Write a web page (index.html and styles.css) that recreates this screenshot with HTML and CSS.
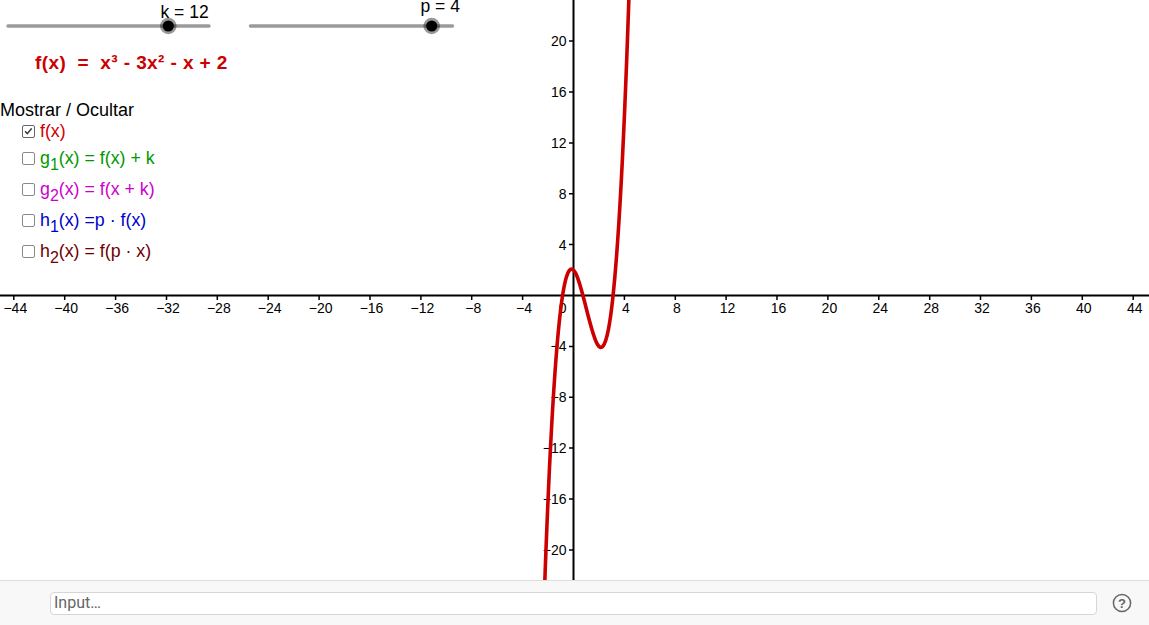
FILE: index.html
```html
<!DOCTYPE html>
<html lang="es">
<head>
<meta charset="utf-8">
<title>Transformaciones de funciones</title>
<link rel="stylesheet" href="styles.css">
</head>
<body>
<div class="app">
  <div class="canvas">
    <svg class="graph" width="1149" height="580" viewBox="0 0 1149 580">
      <line class="axis" x1="0" y1="295.5" x2="1149" y2="295.5"/>
      <line class="axis" x1="573.5" y1="0" x2="573.5" y2="580"/>
      <path class="ticks" d="M13.8 296v4M64.7 296v4M115.6 296v4M166.5 296v4M217.3 296v4M268.2 296v4M319.1 296v4M370 296v4M420.9 296v4M471.7 296v4M522.6 296v4M624.4 296v4M675.3 296v4M726.1 296v4M777 296v4M827.9 296v4M878.8 296v4M929.7 296v4M980.5 296v4M1031.4 296v4M1082.3 296v4M1133.2 296v4M569 41.1h4M569 92h4M569 142.9h4M569 193.7h4M569 244.6h4M569 346.4h4M569 397.3h4M569 448.1h4M569 499h4M569 549.9h4"/>
      <g class="ax ax-x">
        <text x="15.3" y="313">−44</text>
        <text x="66.2" y="313">−40</text>
        <text x="117.1" y="313">−36</text>
        <text x="168" y="313">−32</text>
        <text x="218.8" y="313">−28</text>
        <text x="269.7" y="313">−24</text>
        <text x="320.6" y="313">−20</text>
        <text x="371.5" y="313">−16</text>
        <text x="422.4" y="313">−12</text>
        <text x="473.2" y="313">−8</text>
        <text x="524.1" y="313">−4</text>
        <text x="625.9" y="313">4</text>
        <text x="676.8" y="313">8</text>
        <text x="727.6" y="313">12</text>
        <text x="778.5" y="313">16</text>
        <text x="829.4" y="313">20</text>
        <text x="880.3" y="313">24</text>
        <text x="931.2" y="313">28</text>
        <text x="982" y="313">32</text>
        <text x="1032.9" y="313">36</text>
        <text x="1083.8" y="313">40</text>
        <text x="1134.7" y="313">44</text>
      </g>
      <g class="ax ax-y">
        <text x="566.5" y="313">0</text>
        <text x="566.5" y="46.1">20</text>
        <text x="566.5" y="97">16</text>
        <text x="566.5" y="147.9">12</text>
        <text x="566.5" y="198.7">8</text>
        <text x="566.5" y="249.6">4</text>
        <text x="566.5" y="351.4">−4</text>
        <text x="566.5" y="402.3">−8</text>
        <text x="566.5" y="453.1">−12</text>
        <text x="566.5" y="504">−16</text>
        <text x="566.5" y="554.9">−20</text>
      </g>
      <path class="curve" d="M544.24 597.43C573.08 -229.17 601.91 885.17 630.74 -59.07"/>

      <line class="track" x1="8" y1="26" x2="209" y2="26"/>
      <circle class="halo" cx="168.3" cy="26" r="8.3"/>
      <circle class="knob" cx="168.3" cy="26" r="5.6"/>
      <text class="slider-label" x="160.5" y="17.5">k = 12</text>

      <line class="track" x1="250.5" y1="26" x2="452.5" y2="26"/>
      <circle class="halo" cx="431.7" cy="26" r="8.3"/>
      <circle class="knob" cx="431.7" cy="26" r="5.6"/>
      <text class="slider-label" x="420.5" y="12">p = 4</text>

      <text class="formula" x="35" y="68.5" xml:space="preserve">f(x)  =  x³ - 3x² - x + 2</text>
    </svg>

    <div class="caption">Mostrar / Ocultar</div>
    <ul class="toggles">
      <li class="toggle c-f">
        <span class="box checked"><svg viewBox="0 0 13 13" width="11" height="11"><path d="M2.5 6.3l2.6 2.8 5.2-6.3" /></svg></span>
        <span>f(x)</span>
      </li>
      <li class="toggle c-g1">
        <span class="box"></span>
        <span>g<sub>1</sub>(x) = f(x) + k</span>
      </li>
      <li class="toggle c-g2">
        <span class="box"></span>
        <span>g<sub>2</sub>(x) = f(x + k)</span>
      </li>
      <li class="toggle c-h1">
        <span class="box"></span>
        <span>h<sub>1</sub>(x) =p · f(x)</span>
      </li>
      <li class="toggle c-h2">
        <span class="box"></span>
        <span>h<sub>2</sub>(x) = f(p · x)</span>
      </li>
    </ul>
  </div>

  <div class="inputbar">
    <div class="input">Input…</div>
    <svg class="help" viewBox="0 0 20 20" width="20" height="20">
      <circle cx="10" cy="10" r="8.6"/>
      <text x="10" y="14.6">?</text>
    </svg>
  </div>
</div>
</body>
</html>
```

FILE: styles.css
```css
html, body {
  margin: 0;
  padding: 0;
  background: #ffffff;
}

body {
  font-family: "Liberation Sans", Arial, sans-serif;
  color: #000;
}

.app {
  width: 1149px;
  height: 625px;
  display: flex;
  flex-direction: column;
  overflow: hidden;
}

.canvas {
  position: relative;
  flex: none;
  height: 580px;
  overflow: hidden;
}

.graph {
  display: block;
}

.axis {
  stroke: #000;
  stroke-width: 2;
}

.ticks {
  stroke: #000;
  stroke-width: 1.5;
  fill: none;
}

.ax {
  font-family: "Liberation Sans", Arial, sans-serif;
  font-size: 14px;
  fill: #000;
}

.ax-x {
  text-anchor: middle;
}

.ax-y {
  text-anchor: end;
}

.curve {
  fill: none;
  stroke: #cc0000;
  stroke-width: 3.6;
  stroke-linecap: round;
}

.track {
  stroke: #9a9a9a;
  stroke-width: 3.4;
  stroke-linecap: round;
}

.halo {
  fill: #000;
  fill-opacity: 0.4;
}

.knob {
  fill: #000;
}

.slider-label {
  font-family: "Liberation Sans", Arial, sans-serif;
  font-size: 17.5px;
  fill: #000;
}

.formula {
  font-family: "Liberation Sans", Arial, sans-serif;
  font-size: 19px;
  font-weight: bold;
  letter-spacing: 0.4px;
  fill: #cc0000;
  white-space: pre;
}

.caption {
  position: absolute;
  left: 0;
  top: 100px;
  font-size: 18px;
  line-height: 20px;
  white-space: nowrap;
}

.toggles {
  position: absolute;
  left: 22px;
  top: 121px;
  margin: 0;
  padding: 0;
  list-style: none;
  display: flex;
  flex-direction: column;
}

.toggle {
  display: flex;
  align-items: flex-start;
  gap: 5px;
  height: 31px;
  font-size: 17.8px;
  line-height: 20px;
  white-space: nowrap;
}

.toggle:first-child {
  height: 27px;
}

.toggle sub {
  font-size: 16px;
  line-height: 0;
  vertical-align: -6px;
}

.box {
  flex: none;
  width: 13px;
  height: 13px;
  box-sizing: border-box;
  margin-top: 3.5px;
  border: 1px solid #8a8a8a;
  border-radius: 2px;
  background: #fff;
  display: flex;
  align-items: center;
  justify-content: center;
}

.box.checked {
  border-color: #666;
}

.box svg path {
  fill: none;
  stroke: #333;
  stroke-width: 1.8;
}

.c-f { color: #cc0000; }
.c-g1 { color: #009900; }
.c-g2 { color: #cc00cc; }
.c-h1 { color: #0000cc; }
.c-h2 { color: #700000; }

.inputbar {
  flex: 1;
  display: flex;
  align-items: center;
  gap: 15px;
  padding-left: 50px;
  border-top: 1px solid #dddddd;
  background: #f8f8f8;
}

.input {
  width: 1047px;
  height: 23px;
  box-sizing: border-box;
  border: 1px solid #d6d6d6;
  border-radius: 4px;
  background: #fff;
  padding-left: 3px;
  font-family: Roboto, "Liberation Sans", sans-serif;
  font-size: 16px;
  line-height: 19px;
  color: #666;
}

.help {
  flex: none;
  display: block;
}

.help circle {
  fill: none;
  stroke: #666;
  stroke-width: 1.5;
}

.help text {
  font-family: "Liberation Sans", Arial, sans-serif;
  font-size: 13px;
  font-weight: bold;
  fill: #666;
  text-anchor: middle;
}
```
